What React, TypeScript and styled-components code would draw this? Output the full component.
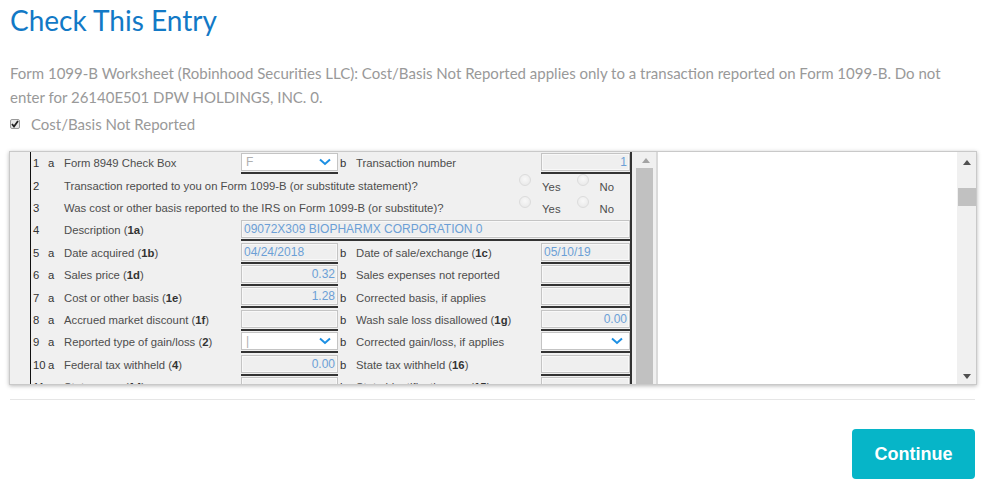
import styled, { createGlobalStyle } from "styled-components";

const GlobalStyle = createGlobalStyle`
  body {
    margin: 0;
    background: #ffffff;
    font-family: Lato, "Open Sans", sans-serif;
  }
`;

const Page = styled.div`
  width: 966px;
  padding: 0 22px 0 10px;
`;

const Title = styled.h1`
  margin: 0;
  padding-top: 3px;
  font-size: 28px;
  line-height: 34px;
  font-weight: 400;
  color: #1279c6;
`;

const Message = styled.p`
  margin: 24px 0 0;
  font-size: 15px;
  line-height: 24px;
  color: #999999;
`;

const CheckRow = styled.label`
  margin-top: 3px;
  height: 24px;
  display: flex;
  align-items: center;
  gap: 11px;
  font-size: 15px;
  color: #999999;
`;

const CheckBox = styled.span`
  width: 10px;
  height: 10px;
  box-sizing: border-box;
  border: 1px solid #9a9a9a;
  border-radius: 2px;
  background: #e9e9e9;
  display: flex;
  align-items: center;
  justify-content: center;
`;

const Frame = styled.div`
  margin: 15px 0 0 -1px;
  width: 968px;
  height: 234px;
  box-sizing: border-box;
  border: 1px solid #c9c9c9;
  box-shadow: 0 1px 4px rgba(0, 0, 0, 0.28);
  display: flex;
  overflow: hidden;
`;

const FormViewport = styled.div`
  flex: 0 0 auto;
  padding-left: 20px;
  background: #f0f0f0;
  overflow: hidden;
`;

const FormTable = styled.div`
  width: 599px;
  border-left: 1px solid #111;
  border-right: 2px solid #333;
  min-height: 100%;
  font-family: "Liberation Sans", Arial, sans-serif;
  font-size: 11.3px;
  color: #4d4d4d;
`;

const Row = styled.div`
  height: 22.4px;
  display: grid;
  grid-template-columns: 15px 18px 177px 97px 18px 185px 89px;
  align-items: center;
`;

const QuestionRow = styled.div`
  height: 22.4px;
  display: grid;
  grid-template-columns: 15px 18px 1fr auto;
  align-items: center;
`;

const Num = styled.span`
  padding-left: 2px;
  color: #333;
  white-space: nowrap;
`;

const Letter = styled.span`
  padding-left: 2px;
  color: #333;
`;

const Label = styled.span`
  white-space: nowrap;
  overflow: visible;
`;

const Strong = styled.b`
  color: #333;
`;

const Cell = styled.div<{ $span?: string }>`
  grid-column: ${(p) => p.$span || "auto"};
  align-self: start;
  padding-top: 1px;
  height: 19px;
  border-bottom: 2px solid #333;
`;

const Field = styled.div<{ $right?: boolean }>`
  height: 18px;
  box-sizing: border-box;
  border: 1px solid #c4c4c4;
  box-shadow: inset 0 0 0 1px #f8f8f8;
  background: #efefef;
  color: #6c9fd6;
  padding: 0 2px;
  font-size: 12px;
  line-height: 16px;
  text-align: ${(p) => (p.$right ? "right" : "left")};
  white-space: nowrap;
  overflow: hidden;
`;

const Select = styled.div`
  height: 18px;
  box-sizing: border-box;
  border: 1px solid #c4c4c4;
  background: #ffffff;
  color: #b0b0b0;
  font-size: 12px;
  padding: 0 6px 0 4px;
  display: flex;
  align-items: center;
  justify-content: space-between;
`;

const Radios = styled.div`
  display: flex;
  align-items: center;
  padding-right: 16px;
`;

const Radio = styled.span`
  width: 12px;
  height: 12px;
  box-sizing: border-box;
  border-radius: 50%;
  border: 1px solid #dcdcdc;
  background: radial-gradient(circle at 50% 40%, #f8f8f8, #e6e6e6);
  margin-top: -12px;
  margin-right: 11px;
`;

const RadioText = styled.span<{ $gap?: number }>`
  margin-right: ${(p) => p.$gap ?? 0}px;
  padding-top: 2px;
`;

const FormScroll = styled.div`
  flex: 0 0 26px;
  background: #f0f0f0;
  border-right: 2px solid #dadada;
  display: flex;
  flex-direction: column;
  padding-left: 4px;
  box-sizing: border-box;
`;

const ScrollArrow = styled.div<{ $color: string; $down?: boolean }>`
  height: 16px;
  display: flex;
  align-items: center;
  justify-content: center;
  &::after {
    content: "";
    border-left: 4px solid transparent;
    border-right: 4px solid transparent;
    ${(p) =>
      p.$down
        ? `border-top: 5px solid ${p.$color};`
        : `border-bottom: 5px solid ${p.$color};`}
  }
`;

const FormThumb = styled.div`
  width: 17px;
  flex: 1;
  background: #c1c1c1;
`;

const Preview = styled.div`
  flex: 1;
  background: #ffffff;
`;

const PanelScroll = styled.div`
  flex: 0 0 19px;
  background: #f0f0f0;
  display: flex;
  flex-direction: column;
  padding-top: 2px;
  box-sizing: border-box;
`;

const PanelThumb = styled.div`
  margin: 18px 0 0 1px;
  height: 18px;
  background: #c1c1c1;
`;

const Spacer = styled.div`
  flex: 1;
`;

const Rule = styled.hr`
  margin: 14px 1px 0 0;
  border: none;
  border-top: 1px solid #e6e6e6;
`;

const Actions = styled.div`
  margin-top: 29px;
  display: flex;
  justify-content: flex-end;
  padding-right: 1px;
`;

const ContinueButton = styled.button`
  width: 123px;
  height: 50px;
  border: none;
  border-radius: 4px;
  background: #06b5c8;
  color: #ffffff;
  font-family: "Liberation Sans", Arial, sans-serif;
  font-weight: 700;
  font-size: 18px;
`;

function Chevron() {
  return (
    <svg width="12" height="8" viewBox="0 0 12 8">
      <polyline points="1,1.5 6,6 11,1.5" fill="none" stroke="#1c8fe3" strokeWidth="2" />
    </svg>
  );
}

function Text({ s }: { s: string }) {
  const parts = s.split("*");
  return (
    <Label>
      {parts.map((p, i) => (i % 2 ? <Strong key={i}>{p}</Strong> : <span key={i}>{p}</span>))}
    </Label>
  );
}

type Input = { kind: "field" | "select"; value: string; right?: boolean };

type Line = {
  n: string;
  a?: string;
  label: string;
  left?: Input;
  b?: string;
  right?: Input;
  wide?: string;
  question?: boolean;
};

const lines: Line[] = [
  { n: "1", a: "a", label: "Form 8949 Check Box", left: { kind: "select", value: "F" }, b: "Transaction number", right: { kind: "field", value: "1", right: true } },
  { n: "2", label: "Transaction reported to you on Form 1099-B (or substitute statement)?", question: true },
  { n: "3", label: "Was cost or other basis reported to the IRS on Form 1099-B (or substitute)?", question: true },
  { n: "4", label: "Description (*1a*)", wide: "09072X309 BIOPHARMX CORPORATION 0" },
  { n: "5", a: "a", label: "Date acquired (*1b*)", left: { kind: "field", value: "04/24/2018" }, b: "Date of sale/exchange (*1c*)", right: { kind: "field", value: "05/10/19" } },
  { n: "6", a: "a", label: "Sales price (*1d*)", left: { kind: "field", value: "0.32", right: true }, b: "Sales expenses not reported", right: { kind: "field", value: "" } },
  { n: "7", a: "a", label: "Cost or other basis (*1e*)", left: { kind: "field", value: "1.28", right: true }, b: "Corrected basis, if applies", right: { kind: "field", value: "" } },
  { n: "8", a: "a", label: "Accrued market discount (*1f*)", left: { kind: "field", value: "" }, b: "Wash sale loss disallowed (*1g*)", right: { kind: "field", value: "0.00", right: true } },
  { n: "9", a: "a", label: "Reported type of gain/loss (*2*)", left: { kind: "select", value: "|" }, b: "Corrected gain/loss, if applies", right: { kind: "select", value: "" } },
  { n: "10", a: "a", label: "Federal tax withheld (*4*)", left: { kind: "field", value: "0.00", right: true }, b: "State tax withheld (*16*)", right: { kind: "field", value: "" } },
  { n: "11", a: "a", label: "State name (*14*)", left: { kind: "field", value: "" }, b: "State identification no. (*15*)", right: { kind: "field", value: "" } },
];

function InputCell({ input, span }: { input: Input; span?: string }) {
  return (
    <Cell $span={span}>
      {input.kind === "select" ? (
        <Select>
          <span>{input.value}</span>
          <Chevron />
        </Select>
      ) : (
        <Field $right={input.right}>{input.value}</Field>
      )}
    </Cell>
  );
}

function FormLine({ line }: { line: Line }) {
  if (line.question) {
    return (
      <QuestionRow>
        <Num>{line.n}</Num>
        <span />
        <Text s={line.label} />
        <Radios>
          <Radio />
          <RadioText $gap={16}>Yes</RadioText>
          <Radio />
          <RadioText>No</RadioText>
        </Radios>
      </QuestionRow>
    );
  }
  return (
    <Row>
      <Num>{line.n}</Num>
      <Letter>{line.a}</Letter>
      <Text s={line.label} />
      {line.wide !== undefined ? (
        <InputCell input={{ kind: "field", value: line.wide }} span="4 / 8" />
      ) : (
        <>
          {line.left && <InputCell input={line.left} />}
          <Letter>b</Letter>
          <Text s={line.b || ""} />
          {line.right && <InputCell input={line.right} />}
        </>
      )}
    </Row>
  );
}

function App() {
  return (
    <Page>
      <GlobalStyle />
      <Title>Check This Entry</Title>
      <Message>
        Form 1099-B Worksheet (Robinhood Securities LLC): Cost/Basis Not Reported applies only to a
        transaction reported on Form 1099-B. Do not enter for 26140E501 DPW HOLDINGS, INC. 0.
      </Message>
      <CheckRow>
        <CheckBox>
          <svg width="8" height="8" viewBox="0 0 8 8">
            <polyline points="1,4 3,6.5 7,1" fill="none" stroke="#222" strokeWidth="1.8" />
          </svg>
        </CheckBox>
        Cost/Basis Not Reported
      </CheckRow>
      <Frame>
        <FormViewport>
          <FormTable>
            {lines.map((l) => (
              <FormLine key={l.n} line={l} />
            ))}
          </FormTable>
        </FormViewport>
        <FormScroll>
          <ScrollArrow $color="#a3a3a3" />
          <FormThumb />
        </FormScroll>
        <Preview />
        <PanelScroll>
          <ScrollArrow $color="#505050" />
          <PanelThumb />
          <Spacer />
          <ScrollArrow $color="#505050" $down />
        </PanelScroll>
      </Frame>
      <Rule />
      <Actions>
        <ContinueButton>Continue</ContinueButton>
      </Actions>
    </Page>
  );
}

export default App;
